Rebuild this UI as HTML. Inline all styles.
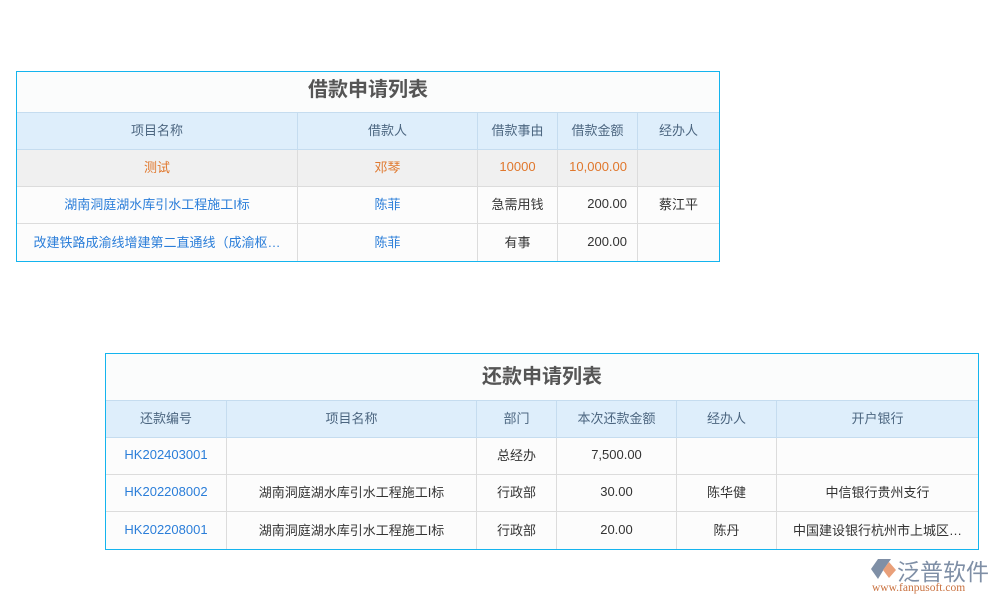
<!DOCTYPE html>
<html><head><meta charset="utf-8"><style>
*{margin:0;padding:0;box-sizing:border-box}
body{width:1000px;height:600px;background:#fff;position:relative;overflow:hidden;font-family:"Liberation Sans","Noto Sans CJK SC",sans-serif;font-size:13px;color:#333}
.t{position:absolute;border:1px solid #14b4ee;background:#fcfcfc}
.c{position:absolute;display:flex;align-items:center;justify-content:center;border-right:1px solid #dcdcdc;border-bottom:1px solid #dcdcdc;white-space:nowrap;overflow:hidden;padding-bottom:3px}
.h{background:#deeefb;color:#4c6680;border-color:#c5dcef}
.ttl{position:absolute;left:0;right:0;top:0;display:flex;align-items:center;justify-content:center;font-size:20px;font-weight:bold;color:#555;background:#fbfcfc;border-bottom:1px solid #c5dcef}
.b{color:#2b7ed9}.o{color:#e0772c}
.r{justify-content:flex-end;padding-right:10px}
.g{background:#f0f0f0}
</style></head><body>

<div class="t" style="left:16px;top:71px;width:704px;height:191px">
<div class="ttl" style="height:41px;padding-bottom:10px">借款申请列表</div>
<div class="c h" style="left:0;top:41px;width:281px;height:37px">项目名称</div>
<div class="c h" style="left:281px;top:41px;width:180px;height:37px">借款人</div>
<div class="c h" style="left:461px;top:41px;width:80px;height:37px">借款事由</div>
<div class="c h" style="left:541px;top:41px;width:80px;height:37px">借款金额</div>
<div class="c h" style="left:621px;top:41px;width:81px;height:37px;border-right:none">经办人</div>

<div class="c g o" style="left:0;top:78px;width:281px;height:37px">测试</div>
<div class="c g o" style="left:281px;top:78px;width:180px;height:37px">邓琴</div>
<div class="c g o" style="left:461px;top:78px;width:80px;height:37px">10000</div>
<div class="c g o r" style="left:541px;top:78px;width:80px;height:37px">10,000.00</div>
<div class="c g" style="left:621px;top:78px;width:81px;height:37px;border-right:none"></div>

<div class="c b" style="left:0;top:115px;width:281px;height:37px">湖南洞庭湖水库引水工程施工I标</div>
<div class="c b" style="left:281px;top:115px;width:180px;height:37px">陈菲</div>
<div class="c" style="left:461px;top:115px;width:80px;height:37px">急需用钱</div>
<div class="c r" style="left:541px;top:115px;width:80px;height:37px">200.00</div>
<div class="c" style="left:621px;top:115px;width:81px;height:37px;border-right:none">蔡江平</div>

<div class="c b" style="left:0;top:152px;width:281px;height:37px;border-bottom:none">改建铁路成渝线增建第二直通线（成渝枢…</div>
<div class="c b" style="left:281px;top:152px;width:180px;height:37px;border-bottom:none">陈菲</div>
<div class="c" style="left:461px;top:152px;width:80px;height:37px;border-bottom:none">有事</div>
<div class="c r" style="left:541px;top:152px;width:80px;height:37px;border-bottom:none">200.00</div>
<div class="c" style="left:621px;top:152px;width:81px;height:37px;border:none"></div>
</div>

<div class="t" style="left:105px;top:353px;width:874px;height:197px">
<div class="ttl" style="height:47px;padding-bottom:6px">还款申请列表</div>
<div class="c h" style="left:0;top:47px;width:121px;height:37px">还款编号</div>
<div class="c h" style="left:121px;top:47px;width:250px;height:37px">项目名称</div>
<div class="c h" style="left:371px;top:47px;width:80px;height:37px">部门</div>
<div class="c h" style="left:451px;top:47px;width:120px;height:37px">本次还款金额</div>
<div class="c h" style="left:571px;top:47px;width:100px;height:37px">经办人</div>
<div class="c h" style="left:671px;top:47px;width:201px;height:37px;border-right:none">开户银行</div>

<div class="c b" style="left:0;top:84px;width:121px;height:37px">HK202403001</div>
<div class="c" style="left:121px;top:84px;width:250px;height:37px"></div>
<div class="c" style="left:371px;top:84px;width:80px;height:37px">总经办</div>
<div class="c" style="left:451px;top:84px;width:120px;height:37px">7,500.00</div>
<div class="c" style="left:571px;top:84px;width:100px;height:37px"></div>
<div class="c" style="left:671px;top:84px;width:201px;height:37px;border-right:none"></div>

<div class="c b" style="left:0;top:121px;width:121px;height:37px">HK202208002</div>
<div class="c" style="left:121px;top:121px;width:250px;height:37px">湖南洞庭湖水库引水工程施工I标</div>
<div class="c" style="left:371px;top:121px;width:80px;height:37px">行政部</div>
<div class="c" style="left:451px;top:121px;width:120px;height:37px">30.00</div>
<div class="c" style="left:571px;top:121px;width:100px;height:37px">陈华健</div>
<div class="c" style="left:671px;top:121px;width:201px;height:37px;border-right:none">中信银行贵州支行</div>

<div class="c b" style="left:0;top:158px;width:121px;height:37px;border-bottom:none">HK202208001</div>
<div class="c" style="left:121px;top:158px;width:250px;height:37px;border-bottom:none">湖南洞庭湖水库引水工程施工I标</div>
<div class="c" style="left:371px;top:158px;width:80px;height:37px;border-bottom:none">行政部</div>
<div class="c" style="left:451px;top:158px;width:120px;height:37px;border-bottom:none">20.00</div>
<div class="c" style="left:571px;top:158px;width:100px;height:37px;border-bottom:none">陈丹</div>
<div class="c" style="left:671px;top:158px;width:201px;height:37px;border:none">中国建设银行杭州市上城区…</div>
</div>

<svg style="position:absolute;left:870px;top:557px" width="28" height="24" viewBox="0 0 28 24">
<path d="M1 12 L8 2 L21 2 L14 12 L8 22 Z" fill="#7f8fa6"/>
<path d="M13 13 L19 5 L26 13 L19 21 Z" fill="#e9a07a"/>
</svg>
<div style="position:absolute;left:897px;top:553px;font-size:23px;color:#7f8fa6;white-space:nowrap">泛普软件</div>
<div style="position:absolute;left:872px;top:582px;font-size:11.5px;color:#c9713f;font-family:'Liberation Serif',serif;white-space:nowrap">www.fanpusoft.com</div>
</body></html>
